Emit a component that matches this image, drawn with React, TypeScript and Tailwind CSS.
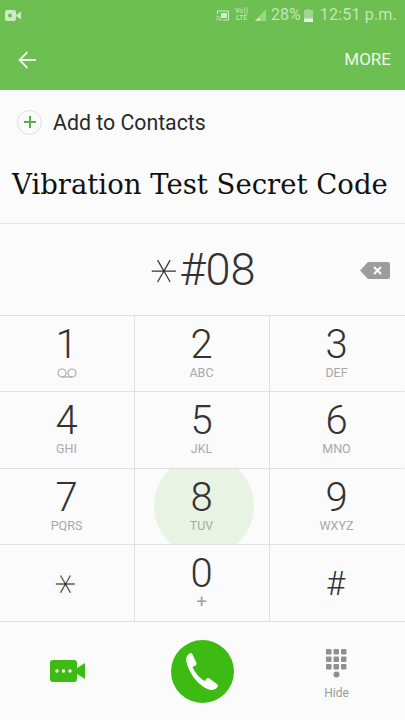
import React from 'react';

const keys = [
  { digit: '1', sub: 'voicemail' },
  { digit: '2', sub: 'ABC' },
  { digit: '3', sub: 'DEF' },
  { digit: '4', sub: 'GHI' },
  { digit: '5', sub: 'JKL' },
  { digit: '6', sub: 'MNO' },
  { digit: '7', sub: 'PQRS' },
  { digit: '8', sub: 'TUV' },
  { digit: '9', sub: 'WXYZ' },
  { digit: '*', sub: '' },
  { digit: '0', sub: '+' },
  { digit: '#', sub: '' },
];

const Star = ({ className }: { className: string }) => (
  <span className={`inline-block rotate-90 font-extralight font-['DejaVu_Sans',sans-serif] ${className}`}>∗</span>
);

const Voicemail = () => (
  <svg width="22" height="10" viewBox="0 0 22 10" fill="none" stroke="#a9a9a9" strokeWidth="1.2">
    <circle cx="6" cy="5" r="4" />
    <circle cx="16" cy="5" r="4" />
    <path d="M6 9h10" />
  </svg>
);

const StatusBar = () => (
  <div className="h-[30px] flex items-center justify-between pl-[5px] pr-[8px] text-[#c5e5b8]">
    <svg width="16" height="11" viewBox="0 0 16 11" fill="#cfe9c4">
      <rect x="0" y="0" width="11" height="11" rx="2" />
      <path d="M11 5l5-3.5v8L11 6z" />
      <circle cx="5" cy="5.5" r="2" fill="#6cbf50" />
    </svg>
    <div className="flex items-center">
      <svg width="13" height="11" viewBox="0 0 13 11" fill="none" stroke="#d3ebc9" strokeWidth="1">
        <path d="M1.5 4V1h11v9H7" />
        <path d="M0.5 10h1M0.5 8c1.500 0 2.500 1 2.500 2.500M0.500 6c2.700 0 4.500 1.800 4.500 4.500" />
        <rect x="5" y="3" width="6" height="5" fill="#d3ebc9" stroke="none" />
      </svg>
      <div className="ml-[5px] w-[15px] text-[7px] leading-[7px] text-center font-medium">
        <div>Vo))</div>
        <div>LTE</div>
      </div>
      <svg className="ml-[6px]" width="11" height="12" viewBox="0 0 11 12" fill="#c5e5b8">
        <path d="M11 0v12H0z" opacity="0.55" />
        <path d="M0 12h5V9H3z" />
      </svg>
      <span className="ml-[5px] text-[16px] leading-none">28%</span>
      <svg className="ml-[3px]" width="9" height="13" viewBox="0 0 9 13" fill="#c5e5b8">
        <path d="M3 0h3v1h3v12H0V1h3z" opacity="0.6" />
        <path d="M0 9.500h9V13H0z" fill="#e6f4e0" />
      </svg>
      <span className="ml-[7px] text-[16px] leading-none tracking-[0.2px]">12:51 p.m.</span>
    </div>
  </div>
);

export default function App() {
  return (
    <div className="w-[405px] h-[720px] overflow-hidden bg-[#fbfbfb] flex flex-col font-['Roboto',sans-serif]">
      <header className="h-[90px] bg-[#6cbf50]">
        <StatusBar />
        <div className="h-[59px] flex items-center justify-between pl-[18px] pr-[14px]">
          <svg width="18" height="18" viewBox="0 0 18 18" fill="none" stroke="#eef8ea" strokeWidth="1.8">
            <path d="M18 9H1.500M9.500 1L1.500 9l8 8" />
          </svg>
          <span className="text-[17px] text-[#eef8ea]">MORE</span>
        </div>
      </header>

      <div className="h-[134px] border-y border-y-[#e3e3e3] border-t-white">
        <div className="h-[62px] flex items-center pl-[17px]">
          <div className="w-[25px] h-[25px] rounded-full border border-[#dedede] flex items-center justify-center">
            <svg width="12" height="12" viewBox="0 0 12 12" stroke="#52b052" strokeWidth="2">
              <path d="M6 0v12M0 6h12" />
            </svg>
          </div>
          <span className="ml-[11px] pt-[2px] text-[21.3px] leading-none text-[#2a2a2a]">Add to Contacts</span>
        </div>
        <div className="pl-[12px] pt-[9px] whitespace-nowrap text-[27.5px] leading-[44px] text-[#111] font-['DejaVu_Serif',serif]">
          Vibration Test Secret Code
        </div>
      </div>

      <div className="relative h-[91px] flex items-center justify-center text-[#333] font-light text-[45px] leading-none">
        <div className="flex items-center pl-[2px]">
          <Star className="text-[53px] leading-[45px] w-[28px] text-center -mt-[3px]" />
          <span>#08</span>
        </div>
        <svg className="absolute left-[360px] top-[38px]" width="30" height="17" viewBox="0 0 30 17">
          <path d="M8 0h20a2 2 0 0 1 2 2v13a2 2 0 0 1-2 2H8L0 8.500z" fill="#9c9c9c" />
          <path d="M14 5l7 7M21 5l-7 7" stroke="#fff" strokeWidth="2" />
        </svg>
      </div>

      <div className="h-[306px] grid grid-cols-[135px_135px_135px] grid-rows-[76px_77px_76px_77px] border-t border-[#e0e0e0]">
        {keys.map((k, i) => (
          <div
            key={k.digit}
            className={`relative overflow-hidden pr-[1px] flex flex-col items-center border-r ${i % 3 !== 2 ? 'border-r-[#e0e0e0]' : 'border-r-transparent'} ${i < 9 ? 'border-b border-b-[#e0e0e0]' : ''}`}
          >
            {k.digit === '8' && (
              <div className="absolute left-[19px] top-[-13px] w-[100px] h-[100px] rounded-full bg-[#e9f3e3]" />
            )}
            {k.digit === '*' ? (
              <div className="h-full flex items-center justify-center text-[#222]">
                <Star className="text-[42px] leading-none" />
              </div>
            ) : k.digit === '#' ? (
              <div className="h-full pr-[2px] flex items-center justify-center text-[#333] text-[33px] font-light">#</div>
            ) : (
              <>
                <span className="relative mt-[9px] text-[40px] leading-[40px] font-light text-[#333]">{k.digit}</span>
                <span className={`relative mt-[1px] h-[14px] flex items-center leading-none ${k.sub === '+' ? 'text-[18px] text-[#9aa39a]' : 'text-[12.5px] text-[#a9a9a9]'}`}>
                  {k.sub === 'voicemail' ? <Voicemail /> : k.sub}
                </span>
              </>
            )}
          </div>
        ))}
      </div>

      <div className="flex-1 border-t border-[#e0e0e0] grid grid-cols-[135px_135px_135px] items-center">
        <div className="flex justify-center">
          <svg width="36" height="23" viewBox="0 0 36 23" fill="#3dbb12">
            <rect x="0" y="0" width="27" height="22" rx="3" />
            <path d="M27 8l8-5v16l-8-5z" />
            <circle cx="7" cy="11" r="1.700" fill="#fff" />
            <circle cx="13.500" cy="11" r="1.700" fill="#fff" />
            <circle cx="20" cy="11" r="1.700" fill="#fff" />
          </svg>
        </div>
        <div className="flex justify-center pr-[1px]">
          <div className="w-[63px] h-[63px] rounded-full bg-[#3dbb12] flex items-center justify-center">
            <svg width="40" height="45" viewBox="0 0 40 45" fill="#fff">
              <path d="M10 4.500L14.500 14Q15 15.500 13.500 16.500L10.500 18C12.500 23 18 30 23 32L24.500 29.500Q26 28.500 27.500 29.500L35.500 35.500Q36.500 36.500 35.500 38C34 40 31 41.500 28.500 41C21 39 13 32 9 24C5 17 3.500 11 4.500 8C5.500 6 7 5 8 4.300Q9.500 3.500 10 4.500Z" />
            </svg>
          </div>
        </div>
        <div className="flex flex-col items-center pr-[2px] pt-[6px]">
          <svg width="21" height="29" viewBox="0 0 21 29" fill="#8f8f8f">
            {[0, 7.5, 15].map((y) =>
              [0, 7.5, 15].map((x) => <rect key={`${x}-${y}`} x={x} y={y} width="5.500" height="5.500" rx="1" />)
            )}
            <circle cx="10.500" cy="25.500" r="3" />
          </svg>
          <span className="mt-[9px] text-[12px] leading-none text-[#9a9a9a]">Hide</span>
        </div>
      </div>
    </div>
  );
}
